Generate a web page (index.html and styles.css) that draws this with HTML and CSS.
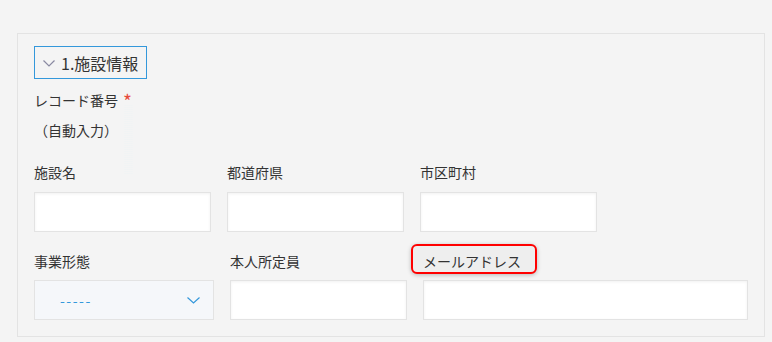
FILE: index.html
```html
<!DOCTYPE html>
<html lang="ja">
<head>
    <meta charset="UTF-8">
    <meta name="viewport" content="width=device-width, initial-scale=1.0">
    <title>施設情報</title>
    <link rel="stylesheet" href="styles.css">
</head>
<body>
    <div class="panel">
        <button class="section-toggle" type="button">
            <svg class="toggle-icon" width="12" height="7" viewBox="0 0 12 7"><path d="M0.5 0.5 L6 6 L11.5 0.5" fill="none" stroke="#8a8aa2" stroke-width="1.2"/></svg>
            <span>1.施設情報</span>
        </button>

        <div class="record">
            <div class="label">レコード番号<span class="required">*</span></div>
            <div class="auto-value">（自動入力）</div>
            <div class="resize-trace"></div>
        </div>

        <div class="row row-first">
            <div class="field">
                <div class="label">施設名</div>
                <input class="text-input" type="text">
            </div>
            <div class="field">
                <div class="label">都道府県</div>
                <input class="text-input" type="text">
            </div>
            <div class="field">
                <div class="label">市区町村</div>
                <input class="text-input" type="text">
            </div>
        </div>

        <div class="row">
            <div class="field field-select">
                <div class="label">事業形態</div>
                <div class="select-box">
                    <span class="select-value">-----</span>
                    <svg width="13" height="7" viewBox="0 0 13 7"><path d="M0.5 0.5 L6.5 6 L12.5 0.5" fill="none" stroke="#3498db" stroke-width="1.2"/></svg>
                </div>
            </div>
            <div class="field">
                <div class="label">本人所定員</div>
                <input class="text-input" type="text">
            </div>
            <div class="field field-wide">
                <div class="label label-marked">メールアドレス</div>
                <input class="text-input" type="text">
            </div>
        </div>
    </div>
</body>
</html>
```

FILE: styles.css
```css
* {
    margin: 0;
    padding: 0;
    box-sizing: border-box;
}

body {
    font-family: "Noto Sans CJK JP", "Noto Sans", sans-serif;
    font-size: 14px;
    color: #333;
    background: #f4f4f4;
    width: 772px;
    height: 342px;
    overflow: hidden;
}

.panel {
    margin: 33px 0 0 17px;
    width: 748px;
    height: 304px;
    border: 1px solid #e3e3e3;
    padding: 12px 16px 15px 16px;
}

.section-toggle {
    display: flex;
    align-items: center;
    gap: 6px;
    height: 33px;
    width: 113px;
    padding: 0 0 0 8px;
    background: #f4f4f4;
    border: 1px solid #3498db;
    font-family: inherit;
    font-size: 16px;
    color: #333;
    cursor: pointer;
}

.toggle-icon {
    margin-top: 1px;
}

.record {
    position: relative;
    margin-top: 11px;
}

.label {
    line-height: 20px;
    height: 20px;
    white-space: nowrap;
}

.required {
    display: inline-block;
    color: #e74c3c;
    font-size: 19px;
    line-height: 20px;
    margin-left: 5px;
    vertical-align: top;
    position: relative;
    top: 1px;
}

.auto-value {
    line-height: 20px;
    margin-top: 10px;
}

.resize-trace {
    position: absolute;
    left: 90px;
    top: 14px;
    width: 9px;
    height: 70px;
    background: repeating-linear-gradient(0deg, #eef3f4 0 1px, #f4f4f4 1px 2px);
    opacity: 0.5;
}

.row {
    display: flex;
    gap: 16px;
    margin-top: 19px;
}

.row-first {
    margin-top: 22px;
}

.row-first .field {
    gap: 10px;
}

.field {
    display: flex;
    flex-direction: column;
    gap: 9px;
    width: 177px;
}

.field-select {
    width: 180px;
}

.field-wide {
    flex: 1;
}

.text-input {
    height: 40px;
    width: 100%;
    border: 1px solid #e3e3e3;
    background: #fff;
    box-shadow: inset 0 1px 3px rgba(0, 0, 0, 0.06);
    outline: none;
}

.select-box {
    height: 40px;
    display: flex;
    align-items: center;
    justify-content: space-between;
    padding: 0 13px 0 25px;
    border: 1px solid #e3e3e3;
    background: #f5f7fa;
}

.select-value {
    color: #3498db;
    letter-spacing: 1.5px;
    line-height: 20px;
}

.label-marked {
    position: relative;
    z-index: 0;
    align-self: flex-start;
}

.label-marked::before {
    content: "";
    position: absolute;
    top: -7px;
    left: -12px;
    right: -16px;
    bottom: -3px;
    z-index: -1;
    border: 2px solid #f00;
    border-radius: 6px;
    background: #eeeeee;
    box-shadow: 0 1px 4px rgba(0, 0, 0, 0.25);
}
```
